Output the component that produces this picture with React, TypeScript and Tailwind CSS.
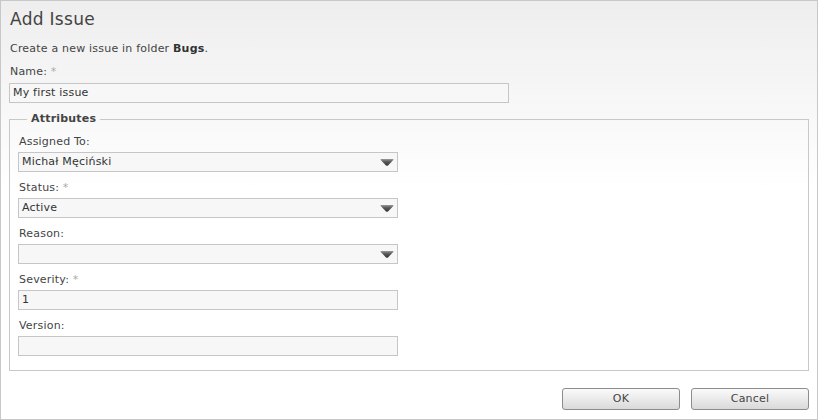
import React from "react";

const font = { fontFamily: '"DejaVu Sans", Verdana, sans-serif' };

function Arrow() {
  return (
    <svg width="14" height="7" viewBox="0 0 14 7" className="shrink-0">
      <defs>
        <linearGradient id="arrowGrad" x1="0" y1="0" x2="0" y2="1">
          <stop offset="0" stopColor="#9a9a9a" />
          <stop offset="0.4" stopColor="#5a5a5a" />
          <stop offset="1" stopColor="#333333" />
        </linearGradient>
      </defs>
      <path d="M1.2 0 H12.8 Q14 0 13.3 1 L8 6.4 Q7 7.2 6 6.4 L0.7 1 Q0 0 1.2 0 Z" fill="url(#arrowGrad)" />
    </svg>
  );
}

function Label({ text, required }: { text: string; required?: boolean }) {
  return (
    <div className="h-[14px] leading-[14px] text-[11px] tracking-[0.2px] text-[#444]">
      {text}
      {required && <span className="text-[#aaa]"> *</span>}
    </div>
  );
}

function TextBox({ value, width }: { value?: string; width: string }) {
  return (
    <div className={`${width} h-[20px] border border-[#c6c6c6] bg-[#f7f7f7] px-[3px] text-[11px] tracking-[0.2px] leading-[18px] text-[#333]`}>
      {value}
    </div>
  );
}

function Select({ value }: { value?: string }) {
  return (
    <div className="w-[380px] h-[20px] border border-[#c6c6c6] bg-[#f7f7f7] pl-[3px] pr-[3px] flex items-center justify-between text-[11px] tracking-[0.2px] text-[#333]">
      <span className="leading-[18px]">{value}</span>
      <Arrow />
    </div>
  );
}

export default function App() {
  const rows = [
    { label: "Assigned To:", value: "Michał Męciński", select: true },
    { label: "Status:", value: "Active", select: true, required: true },
    { label: "Reason:", value: "", select: true },
    { label: "Severity:", value: "1", select: false, required: true },
    { label: "Version:", value: "", select: false },
  ];

  return (
    <div
      style={font}
      className="w-[818px] h-[420px] border border-[#c8c8c8] bg-[linear-gradient(180deg,#eeeeee_0px,#ffffff_190px)] pl-[8px] flex flex-col"
    >
      <div className="mt-[8px] ml-[1px] h-[20px] leading-[20px] text-[17px] tracking-[0.3px] text-[#444]">Add Issue</div>
      <div className="mt-[13px] ml-[1px] h-[14px] leading-[14px] text-[11px] tracking-[0.2px] text-[#444]">
        Create a new issue in folder <b className="text-[#333]">Bugs</b>.
      </div>
      <div className="mt-[9px] ml-[1px]">
        <Label text="Name:" required />
      </div>
      <div className="mt-[4px]">
        <TextBox value="My first issue" width="w-[500px]" />
      </div>

      <fieldset className="mt-[9px] w-[800px] border border-[#c8c8c8] pl-[8px] pb-[14px]">
        <legend className="ml-[9px] px-[4px] h-[14px] leading-[14px] text-[11px] tracking-[0.2px] font-bold text-[#444]">Attributes</legend>
        <div className="mt-[9px] flex flex-col gap-[9px]">
          {rows.map((r) => (
            <div key={r.label} className="flex flex-col gap-[3px]">
              <div className="ml-[1px]">
                <Label text={r.label} required={r.required} />
              </div>
              {r.select ? <Select value={r.value} /> : <TextBox value={r.value} width="w-[380px]" />}
            </div>
          ))}
        </div>
      </fieldset>

      <div className="mt-[17px] w-[800px] flex justify-end gap-[11px]">
        {["OK", "Cancel"].map((b) => (
          <button
            key={b}
            className="w-[118px] h-[22px] rounded-[3px] border border-[#8c8c8c] bg-[linear-gradient(180deg,#fafafa_0%,#ececec_45%,#d9d9d9_100%)] text-[11px] tracking-[0.2px] leading-[20px] text-[#444]"
          >
            {b}
          </button>
        ))}
      </div>
    </div>
  );
}
